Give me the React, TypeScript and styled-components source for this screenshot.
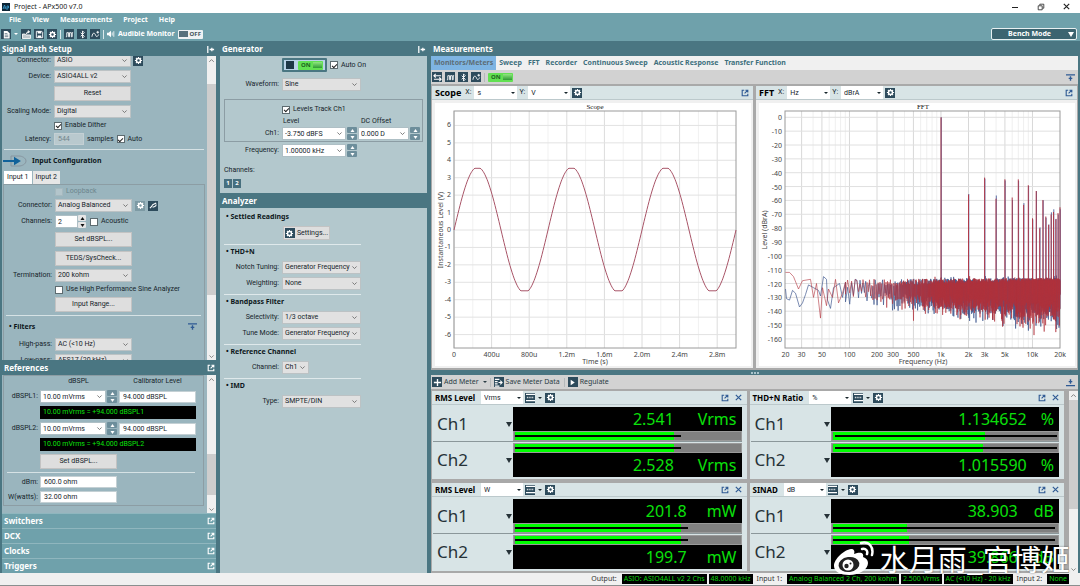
import React from "react";
import styled, { createGlobalStyle } from "styled-components";

const ui = `Roboto, "Liberation Sans", sans-serif`;
const head = `"Noto Sans", "Open Sans", sans-serif`;
const teal = "#4a7682";
const tealLight = "#6fa1ab";
const navy = "#2d4b5c";
const link = "#2f5a94";

const Global = createGlobalStyle`
  *, *::before, *::after { box-sizing: border-box; }
  body { margin: 0; background: ${teal}; color: #16242a; font: 7px/9px ${ui}; }
  button, input, select { font: inherit; color: inherit; margin: 0; padding: 0; border-radius: 0; }
  h1, h2, h3, p { margin: 0; font: inherit; }
`;

/* ---------- window chrome ---------- */
const Shell = styled.div`
  display: flex;
  flex-direction: column;
  height: 100vh;
  overflow: hidden;
`;
const TitleBar = styled.header`
  display: flex;
  align-items: center;
  gap: 4px;
  flex: none;
  height: 13px;
  padding: 0 9px 0 2px;
  background: #fff;
  color: #222;
  font: 7px/13px ${head};
`;
const WindowButtons = styled.div`
  display: flex;
  gap: 17px;
  margin-left: auto;
`;
const PlainButton = styled.button`
  display: flex;
  align-items: center;
  justify-content: center;
  flex: none;
  border: 0;
  background: none;
`;
const MenuBar = styled.nav`
  display: flex;
  align-items: center;
  gap: 11px;
  flex: none;
  height: 14px;
  padding: 0 9px;
  background: ${tealLight};
`;
const MenuItem = styled.button`
  border: 0;
  background: none;
  color: #fff;
  font: bold 7px/14px ${head};
`;
const MainTools = styled.div`
  display: flex;
  align-items: center;
  gap: 3px;
  flex: none;
  height: 14px;
  padding: 0 3px 0 1px;
  background: ${tealLight};
  color: #fff;
`;
const Divider = styled.i<{ $dark?: boolean }>`
  flex: none;
  width: 1px;
  height: 9px;
  background: ${(p) => (p.$dark ? "#b4b9bb" : "#dce9ec")};
`;
const ToolLabel = styled.span`
  font: bold 7px/14px ${head};
`;
const Caret = styled.i<{ $big?: boolean }>`
  flex: none;
  width: 0;
  height: 0;
  border: ${(p) => (p.$big ? 3 : 2)}px solid transparent;
  border-top: ${(p) => (p.$big ? 5 : 2)}px solid currentColor;
  border-bottom: 0;
`;
const BenchMode = styled.button`
  display: flex;
  align-items: center;
  justify-content: flex-end;
  gap: 17px;
  width: 86px;
  height: 12px;
  margin-left: auto;
  padding: 0 2px;
  border: 1px solid #e8f0f1;
  border-radius: 2px;
  background: #3c6470;
  color: #fff;
  font: bold 7px/10px ${head};
`;

/* ---------- columns ---------- */
const Main = styled.main`
  display: flex;
  flex: 1;
  min-height: 0;
  gap: 4px;
  padding: 0 2px;
  background: ${teal};
`;
const Column = styled.section<{ $width?: number }>`
  display: flex;
  flex-direction: column;
  min-width: 0;
  flex: ${(p) => (p.$width ? `0 0 ${p.$width}px` : "1")};
`;
const PanelHead = styled.div<{ $closed?: boolean; $inset?: number }>`
  display: flex;
  align-items: center;
  justify-content: space-between;
  flex: none;
  height: 15px;
  padding: 0 1px 0 ${(p) => p.$inset ?? 2}px;
  background: ${(p) => (p.$closed ? tealLight : teal)};
  border-top: 1px solid ${(p) => (p.$closed ? "#8fb6be" : teal)};
  color: #fff;
`;
const PanelTitle = styled.h2`
  font: bold 8px/14px ${head};
`;
const Viewport = styled.div<{ $grow?: boolean }>`
  display: flex;
  flex: ${(p) => (p.$grow ? "1 1 0" : "none")};
  min-height: 0;
  overflow: hidden;
  background: #9ab5be;
`;
const Scrolled = styled.div<{ $up?: number }>`
  flex: 1;
  min-width: 0;
  margin-top: -${(p) => p.$up ?? 0}px;
`;
const Track = styled.div`
  display: flex;
  flex-direction: column;
  align-items: center;
  flex: none;
  width: 9px;
  background: #f0f0f0;
  color: #777;
`;
const Thumb = styled.i<{ $before: number; $size: number }>`
  width: 100%;
  margin-top: ${(p) => p.$before}px;
  height: ${(p) => p.$size}px;
  background: #cdcdcd;
`;
const TrackEnd = styled.span`
  display: flex;
  margin-top: auto;
`;
const Rule = styled.hr<{ $top?: number; $bottom?: number; $right?: number }>`
  height: 1px;
  border: 0;
  margin: ${(p) => p.$top ?? 3}px ${(p) => p.$right ?? 3}px ${(p) => p.$bottom ?? 3}px 2px;
  background: #d6e2e5;
`;

/* ---------- form parts ---------- */
const Row = styled.div<{ $label: number; $h?: number; $mb?: number }>`
  display: grid;
  grid-template-columns: ${(p) => p.$label}px 1fr;
  column-gap: 3px;
  align-items: center;
  height: ${(p) => p.$h ?? 13}px;
  margin-bottom: ${(p) => p.$mb ?? 3}px;
`;
const Label = styled.label`
  text-align: right;
  white-space: nowrap;
`;
const Cells = styled.div<{ $gap?: number; $h?: number }>`
  display: flex;
  align-items: center;
  gap: ${(p) => p.$gap ?? 3}px;
  height: ${(p) => (p.$h ? `${p.$h}px` : "100%")};
`;
const Box = styled.span<{ $w: number; $white?: boolean }>`
  position: relative;
  display: flex;
  flex: none;
  width: ${(p) => p.$w}px;
  height: 13px;
  border: 1px solid ${(p) => (p.$white ? "#aebfc5" : "#bcc2c4")};
  background: ${(p) => (p.$white ? "#fff" : "#e1e1e1")};
  & > select,
  & > input {
    appearance: none;
    width: 100%;
    min-width: 0;
    height: 11px;
    border: 0;
    padding: 0 2px;
    background: none;
    outline: 0;
  }
  & > svg {
    position: absolute;
    right: 2px;
    top: 2px;
    color: #666;
    pointer-events: none;
  }
`;
const TextBox = styled.input<{ $w: number }>`
  width: ${(p) => p.$w}px;
  height: 12px;
  border: 1px solid #c4d0d4;
  padding: 0 3px;
  background: #fff;
  &:disabled {
    background: #b9c9ce;
    color: #71858c;
  }
`;
const PushButton = styled.button<{ $w: number }>`
  display: flex;
  align-items: center;
  justify-content: center;
  gap: 2px;
  width: ${(p) => p.$w}px;
  height: 100%;
  border: 1px solid #c3c3c3;
  background: #dedede;
`;
const CheckLabel = styled.label<{ $dim?: boolean }>`
  display: flex;
  align-items: center;
  gap: 3px;
  white-space: nowrap;
  color: ${(p) => (p.$dim ? "#6d858d" : "inherit")};
`;
const CheckBox = styled.input`
  appearance: none;
  display: grid;
  place-items: center;
  flex: none;
  width: 8px;
  height: 8px;
  border: 1px solid #5d6b70;
  background: #fff;
  &:checked::before {
    content: "";
    width: 5px;
    height: 3px;
    border: solid #222;
    border-width: 0 0 1px 1px;
    transform: rotate(-45deg);
  }
  &:disabled {
    border-color: #a6b9bf;
    background: #b3c5cb;
  }
`;
const SpinBox = styled.span`
  display: flex;
  flex-direction: column;
  flex: none;
  gap: 1px;
  width: 10px;
  height: 13px;
`;
const SpinButton = styled.button<{ $light?: boolean }>`
  display: grid;
  place-items: center;
  flex: 1;
  border: 0;
  border-radius: 1px;
  background: ${(p) => (p.$light ? "#e6e6e6" : "#6d8e9b")};
  color: ${(p) => (p.$light ? "#111" : "#fff")};
`;
const CountBox = styled.span`
  display: flex;
  & > ${SpinBox} {
    width: 8px;
  }
`;
const Tile = styled.button<{ $dim?: boolean }>`
  display: grid;
  place-items: center;
  flex: none;
  width: 10px;
  height: 10px;
  border: 0;
  background: ${(p) => (p.$dim ? "#7d9aa4" : navy)};
  color: #fff;
`;
const Heading = styled.h3`
  font: bold 7px/14px ${head};
  color: #0d171b;
`;

/* ---------- left column ---------- */
const InputHead = styled.div`
  display: flex;
  align-items: center;
  gap: 4px;
  height: 15px;
  padding-left: 1px;
`;
const Tabs = styled.div`
  display: flex;
  gap: 1px;
  margin: 3px 0 0 2px;
`;
const InputTab = styled.button<{ $active?: boolean }>`
  height: 13px;
  padding: 0 3px;
  border: 0;
  background: ${(p) => (p.$active ? "#fff" : "#e6e6e6")};
`;
const GroupBox = styled.div<{ $pad?: string; $margin?: string }>`
  border: 1px solid #8c9da4;
  padding: ${(p) => p.$pad ?? "2px 0 0"};
  margin: ${(p) => p.$margin ?? "0"};
`;
const FilterHead = styled.div`
  display: flex;
  align-items: center;
  justify-content: space-between;
  height: 15px;
  margin: 3px 7px 4px 5px;
  color: ${link};
`;
const RefGrid = styled.div`
  display: grid;
  grid-template-columns: 33px 77px 77px;
  column-gap: 2px;
  row-gap: 3px;
  align-items: center;
  & > label {
    text-align: right;
    white-space: nowrap;
  }
`;
const Centered = styled.span`
  text-align: center;
  line-height: 11px;
`;
const Readout = styled.output`
  grid-column: 2 / 4;
  height: 13px;
  padding-left: 3px;
  background: #000;
  color: #0be00b;
  line-height: 13px;
`;

/* ---------- generator and analyzer ---------- */
const Panel = styled.div<{ $grow?: boolean }>`
  flex: ${(p) => (p.$grow ? "1" : "none")};
  padding: 2px 4px;
  background: #b3c8cd;
`;
const LevelHeads = styled.div`
  display: grid;
  grid-template-columns: 78px 1fr;
  padding-left: 1px;
  white-space: nowrap;
`;
const OutputSwitch = styled.button`
  display: flex;
  align-items: center;
  gap: 4px;
  width: 45px;
  height: 14px;
  border: 2px solid ${teal};
  border-radius: 1px;
  padding: 0 2px;
  background: #b9d3e8;
`;
const StopMark = styled.i`
  width: 8px;
  height: 8px;
  background: #1e3848;
`;
const OnPill = styled.span`
  display: flex;
  align-items: center;
  justify-content: space-between;
  width: 25px;
  height: 9px;
  padding: 0 1px 0 3px;
  border-radius: 1px;
  background: #62e052;
  color: #1b6420;
  font: bold 6px/9px ${head};
`;
const PillKnob = styled.i<{ $off?: boolean }>`
  width: 9px;
  height: 6px;
  background: ${(p) => (p.$off ? "#56717c" : "linear-gradient(#8fe87f, #2f9a35)")};
`;
const OffPill = styled.button`
  display: flex;
  align-items: center;
  gap: 2px;
  width: 25px;
  height: 9px;
  border: 0;
  border-radius: 1px;
  padding: 0 1px;
  background: #eef2f3;
  color: #44545b;
  font: bold 6px/9px ${head};
`;
const ChannelButton = styled.button`
  width: 8px;
  height: 9px;
  border: 0;
  background: #476f7e;
  color: #fff;
  font: bold 6px/9px ${head};
`;
const Section = styled.section`
  padding: 0 0 1px;
  & + & {
    border-top: 1px solid #dfe9eb;
  }
  & > h3 {
    padding-left: 2px;
    margin-bottom: 2px;
  }
`;
const SectionWidth = styled.div`
  width: 137px;
`;

/* ---------- measurements ---------- */
const MeasureTabs = styled.div`
  display: flex;
  flex: none;
  height: 14px;
  background: #f0f0f0;
`;
const MeasureTab = styled.button<{ $active?: boolean }>`
  border: 0;
  padding: 0 3px;
  background: ${(p) => (p.$active ? "#7eb4e2" : "none")};
  color: ${(p) => (p.$active ? "#5d6d75" : "#3d6f7d")};
  font: bold 7px/14px ${head};
`;
const Tools = styled.div`
  display: flex;
  align-items: center;
  gap: 3px;
  flex: none;
  height: 14px;
  padding: 0 3px 0 1px;
  background: #d2d2d2;
  color: #2b3c44;
  & > :last-child {
    margin-left: auto;
    color: ${link};
  }
`;
const ToolButton = styled.button`
  display: flex;
  align-items: center;
  gap: 2px;
  margin-right: 1px;
  border: 0;
  background: none;
  font: 7px/14px ${head};
`;
const Graphs = styled.div`
  display: grid;
  grid-template-columns: 1fr 1fr;
  gap: 3px;
  flex: none;
  padding: 2px 1px;
  background: #a9a9a9;
`;
const GraphPanel = styled.article`
  min-width: 0;
  background: #f0f0f0;
`;
const GraphHead = styled.div`
  display: flex;
  align-items: center;
  height: 14px;
  padding: 0 4px 0 3px;
  border-bottom: 1px solid #bcc9cc;
  background: #d8e4e6;
  color: #16242a;
`;
const GraphTitle = styled.h3`
  font: bold 9px/13px ${head};
  margin-right: 4px;
  color: #000;
`;
const AxisPick = styled.label`
  display: flex;
  align-items: center;
  gap: 3px;
  margin-right: 2px;
`;
const UnitBox = styled.span<{ $w: number }>`
  position: relative;
  display: flex;
  align-items: center;
  width: ${(p) => p.$w}px;
  height: 13px;
  background: #fff;
  & > select {
    appearance: none;
    width: 100%;
    height: 13px;
    border: 0;
    padding: 1px 3px 0;
    background: none;
    outline: 0;
  }
  & > i {
    position: absolute;
    right: 2px;
    pointer-events: none;
  }
`;
const HeadEnd = styled.span`
  display: flex;
  align-items: center;
  gap: 5px;
  margin-left: auto;
  color: ${link};
`;
const ChartArea = styled.div`
  padding: 3px 2px 2px 3px;
  & > svg {
    display: block;
    width: 100%;
    height: auto;
    background: #fff;
  }
`;
const Splitter = styled.div`
  display: flex;
  align-items: center;
  justify-content: center;
  gap: 1px;
  flex: none;
  height: 5px;
  background: ${teal};
  & > i {
    width: 2px;
    height: 2px;
    background: #a9c3cb;
  }
`;
const MeterArea = styled.div`
  display: flex;
  flex: 1;
  min-height: 0;
  overflow: hidden;
  border-top: 2px solid #a9a9a9;
  background: #a9a9a9;
`;
const MeterGrid = styled.div`
  display: grid;
  grid-template-columns: 1fr 1fr;
  align-content: start;
  gap: 4px 3px;
  flex: 1;
  padding: 0 5px 0 1px;
`;
const MeterCard = styled.article`
  min-width: 0;
  padding-bottom: 2px;
  background: #d8e4e6;
`;
const MeterTitle = styled.h3`
  font: bold 8px/13px ${head};
  margin-right: 6px;
  color: #000;
`;
const MeterTools = styled.span`
  display: flex;
  align-items: center;
  gap: 3px;
  margin-left: 2px;
`;
const MeterBody = styled.div`
  padding: 2px 5px 0 1px;
`;
const Channel = styled.div`
  display: grid;
  grid-template-columns: 80px 1fr;
  & + & {
    border-top: 1px solid #8b979a;
    padding-top: 1px;
  }
`;
const ChannelName = styled.div`
  display: flex;
  align-items: center;
  justify-content: space-between;
  padding: 0 1px 0 4px;
  font: 17px/34px ${head};
  color: #263238;
`;
const ChannelData = styled.div<{ $flip?: boolean }>`
  display: flex;
  flex-direction: ${(p) => (p.$flip ? "column-reverse" : "column")};
`;
const Digits = styled.div<{ $gap: number }>`
  display: flex;
  justify-content: flex-end;
  gap: ${(p) => p.$gap}px;
  height: 24px;
  padding-right: 5px;
  background: #000;
  color: #0be00b;
  font: 16px/24px ${head};
`;
const Bar = styled.div`
  display: grid;
  align-items: center;
  height: 10px;
  padding: 0 1px;
  border: 1px solid #9a9a9a;
  background: #808080;
  & > i {
    grid-area: 1 / 1;
  }
`;
const BarFill = styled.i`
  height: 8px;
  background: #00ff00;
`;
const BarRange = styled.i`
  height: 2px;
  background: #000;
`;

const StatusBar = styled.footer`
  display: flex;
  align-items: center;
  justify-content: flex-end;
  gap: 2px;
  flex: none;
  height: 13px;
  padding-right: 11px;
  border-bottom: 1px solid #8a8f8f;
  background: #f0f0f0;
  color: #333;
  font: 7px/10px ${head};
`;
const StatusLabel = styled.span`
  margin: 0 3px 0 2px;
`;
const Chip = styled.output`
  padding: 0 2px;
  background: #000;
  color: #0bd00b;
`;
const Watermark = styled.div`
  position: absolute;
  right: 10px;
  bottom: 8px;
  display: flex;
  align-items: center;
  gap: 6px;
  color: #fff;
  font: 29px/40px "Noto Sans CJK SC", sans-serif;
  text-shadow: 0 0 2px rgba(0, 0, 0, 0.5);
  pointer-events: none;
`;

/* ---------- icons ---------- */
type IconName =
  | "gear" | "doc" | "open" | "save" | "square" | "bluetooth" | "curve" | "speaker"
  | "swap" | "plus" | "export" | "play" | "popout" | "close" | "collapse" | "expand"
  | "dock" | "mic" | "chevron" | "up" | "down" | "scrollUp" | "min" | "restore" | "meter";

const s = { fill: "none", stroke: "currentColor" } as const;
const glyphs: Record<IconName, React.ReactNode> = {
  gear: (
    <>
      <circle cx="5" cy="5" r="2.2" {...s} strokeWidth="1.6" />
      <path d="M5 1v1.5M5 7.5V9M1 5h1.500M7.500 5H9M2.200 2.200l1 1M6.800 6.800l1 1M7.800 2.200l-1 1M3.200 6.800l-1 1" {...s} strokeWidth="1.3" />
    </>
  ),
  doc: (
    <>
      <path d="M2 1h4l2.500 2.500V9.500H2z" fill="currentColor" />
      <path d="M3 4h3M3 5.700h4M3 7.400h4" fill="none" stroke={navy} strokeWidth=".7" />
    </>
  ),
  open: <path d="M.5 4.500h3l1 1h5v4h-9zM5 4.500C5 2.500 6 2 7.500 2M6.500 .5l2 1.500-2 1.500" fill="currentColor" fillOpacity=".7" stroke="currentColor" />,
  save: (
    <>
      <path d="M1.500 1.500h6l1 1v6h-7z" {...s} />
      <path d="M3 1.500h4v2.500H3zM3 6h4v2.500H3z" fill="currentColor" />
    </>
  ),
  square: <path d="M1 7.500h1V3h2v4.500h1V3h2v4.500h1V3h1" {...s} />,
  bluetooth: <path d="M3 3l4 4-2 2V1l2 2-4 4" {...s} />,
  curve: <path d="M1 7.500C2 2 4 3 5 5.500S7 8 8.500 5M6 2.500h3M7.500 1v3" {...s} />,
  speaker: (
    <>
      <path d="M0 3.500h2L5 1v8L2 6.500H0z" fill="currentColor" />
      <path d="M6.500 3v4M8.500 1.500v7" {...s} />
    </>
  ),
  swap: <path d="M1 3h8M1 7h8M3 1L1 3l2 2M7 5l2 2-2 2" {...s} strokeWidth="1.200" />,
  plus: <path d="M5 1v8M1 5h8" {...s} strokeWidth="1.500" />,
  export: <path d="M1 1.500h5M1 4h3M1 6.500h3M1 9h5M5 5h4M7 3l2 2-2 2" {...s} strokeWidth="1.200" />,
  play: <path d="M3 2l4.500 3L3 8z" fill="currentColor" />,
  popout: <path d="M4 1.500H1.500v7h7V6M5.500 1.500h3v3M8.500 1.500L4.500 5.500" {...s} strokeWidth="1.400" />,
  close: <path d="M2 2l6 6M8 2L2 8" {...s} strokeWidth="1.300" />,
  collapse: <path d="M0 2h10M5 3.500v5M3 6h4" {...s} strokeWidth="1.500" />,
  expand: <path d="M0 8.500h10M5 1.500v5M3 4h4" {...s} strokeWidth="1.500" />,
  dock: <path d="M2 1v8M4 5h5M6.500 3v4" {...s} strokeWidth="1.400" />,
  mic: <path d="M1 8l2-2M3 6c1-3 3-2 5-4M4 7c2-1 4 0 4-3" {...s} strokeWidth="1.200" />,
  chevron: <path d="M2 3.500L5 6.500 8 3.500" {...s} strokeWidth="1.200" />,
  up: <path d="M1 8l4-6 4 6z" fill="currentColor" />,
  down: <path d="M1 2l4 6 4-6z" fill="currentColor" />,
  scrollUp: <path d="M2.500 6.500L5 4l2.500 2.500" {...s} />,
  min: <path d="M2 5.500h6" {...s} />,
  restore: <path d="M1.500 3.500h5v5h-5zM3.500 3V1.500h5v5H7" {...s} />,
  meter: <path d="M0 1.500h10M0 8.500h10M1 5h1M3 5h1M5 5h1M7 5h1" {...s} strokeWidth="1.500" />,
};
const Icon = ({ name, size = 10 }: { name: IconName; size?: number }) => (
  <svg viewBox="0 0 10 10" width={size} height={size} aria-hidden="true">
    {glyphs[name]}
  </svg>
);
const IconTile = ({ name, label, dim }: { name: IconName; label: string; dim?: boolean }) => (
  <Tile aria-label={label} $dim={dim}>
    <Icon name={name} size={9} />
  </Tile>
);

/* ---------- small composites ---------- */
const Select = ({ id, value, w, white, label }: { id?: string; value: string; w: number; white?: boolean; label?: string }) => (
  <Box $w={w} $white={white}>
    <select id={id} aria-label={label} defaultValue={value}>
      <option>{value}</option>
    </select>
    <Icon name="chevron" size={7} />
  </Box>
);
const Combo = ({ id, value, w, label }: { id?: string; value: string; w: number; label?: string }) => (
  <Box $w={w} $white>
    <input id={id} aria-label={label} defaultValue={value} />
    <Icon name="chevron" size={7} />
  </Box>
);
const Spinner = ({ label, light }: { label: string; light?: boolean }) => (
  <SpinBox>
    <SpinButton $light={light} aria-label={`${label} up`}><Icon name="up" size={5} /></SpinButton>
    <SpinButton $light={light} aria-label={`${label} down`}><Icon name="down" size={5} /></SpinButton>
  </SpinBox>
);
const Check = ({ text, on, disabled }: { text: string; on?: boolean; disabled?: boolean }) => (
  <CheckLabel $dim={disabled}>
    <CheckBox type="checkbox" defaultChecked={on} disabled={disabled} />
    {text}
  </CheckLabel>
);
const SelectRow = ({ id, text, value, label, w = 77, mb }: { id: string; text: string; value: string; label: number; w?: number; mb?: number }) => (
  <Row $label={label} $mb={mb}>
    <Label htmlFor={id}>{text}</Label>
    <Select id={id} value={value} w={w} />
  </Row>
);
const ButtonRow = ({ label, text, mb = 4 }: { label: number; text: string; mb?: number }) => (
  <Row $label={label} $h={15} $mb={mb}>
    <span />
    <PushButton $w={77}>{text}</PushButton>
  </Row>
);
const UnitSelect = ({ value, w, label }: { value: string; w: number; label: string }) => (
  <UnitBox $w={w}>
    <select aria-label={label} defaultValue={value}>
      <option>{value}</option>
    </select>
    <Caret />
  </UnitBox>
);
const ScrollBar = ({ before, size }: { before: number; size: number }) => (
  <Track>
    <Icon name="scrollUp" size={9} />
    <Thumb $before={before} $size={size} />
    <TrackEnd><Icon name="chevron" size={7} /></TrackEnd>
  </Track>
);

/* ---------- charts ---------- */
const axisText = { fontFamily: "Noto Sans, sans-serif", fontSize: 7, fill: "#444" };

const ScopeChart = () => {
  const left = 19, right = 301, top = 8, bottom = 245;
  const x = (ms: number) => left + ms * 94;
  const y = (v: number) => 127 - v * 17.43;
  const wave: string[] = [];
  for (let px = 0; px <= 282; px += 1) {
    const v = 3.61 * Math.sin((px / 94) * Math.PI * 2);
    wave.push(`${left + px},${y(Math.max(-3.49, Math.min(3.54, v))).toFixed(1)}`);
  }
  return (
    <svg viewBox="0 0 316 263" role="img" aria-label="Scope graph">
      {Array.from({ length: 15 }, (_, i) => (
        <line key={i} x1={x(i * 0.2)} x2={x(i * 0.2)} y1={top} y2={bottom} stroke={i % 2 ? "#f1f1f1" : "#dcdcdc"} />
      ))}
      {Array.from({ length: 13 }, (_, i) => (
        <g key={i}>
          <line x1={left} x2={right} y1={y(i - 6)} y2={y(i - 6)} stroke="#e2e2e2" />
          <text x={left - 3} y={y(i - 6) + 2} textAnchor="end" {...axisText}>{i - 6}</text>
        </g>
      ))}
      <rect x={left} y={top} width={right - left} height={bottom - top} fill="none" stroke="#9a9a9a" />
      <polyline points={wave.join(" ")} fill="none" stroke="#a95568" strokeWidth="1" />
      {["0", "400u", "800u", "1.2m", "1.6m", "2.0m", "2.4m", "2.8m"].map((t, i) => (
        <text key={t} x={x(i * 0.4)} y={254} textAnchor="middle" {...axisText}>{t}</text>
      ))}
      <text x={160} y={261} textAnchor="middle" {...axisText}>Time (s)</text>
      <text x={160} y={6} textAnchor="middle" fontFamily="Liberation Serif, serif" fontSize="7" fill="#111">Scope</text>
      <text transform="rotate(-90 8 127)" x={8} y={127} textAnchor="middle" {...axisText}>Instantaneous Level (V)</text>
    </svg>
  );
};

const harmonics = [0, -55, -43, -57, -44, -59, -46, -63, -49, -72, -53, -80, -60, -71, -78, -69, -67, -74, -69, -65];

const redStart = [[0, -112], [4, -112], [8, -115], [13, -124], [17, -118], [25, -117], [28, -130], [31, -120], [35, -145], [37, -123], [41, -136], [43, -124], [47, -130], [50, -117], [53, -134], [57, -127], [60, -119]];
const blueStart = [[0, -124], [1, -131], [4, -132], [7, -125], [10, -127], [14, -137], [17, -134], [20, -128], [23, -121], [28, -123], [33, -125], [35, -129], [38, -115], [41, -117], [42, -132], [45, -138], [48, -123], [54, -120], [57, -130], [60, -119]];

const plotX = (f: number) => 26.5 + 91.5 * Math.log10(f / 20);
const plotY = (db: number) => 14.3 - db * 1.385;

const spectrum = (seed: number, start: number[][], shift: number) => {
  let state = seed;
  const rnd = () => ((state = (state * 16807) % 2147483647) / 2147483647);
  const pts = start.map(([px, db]) => [px, db]);
  let f = 20 * Math.pow(10, 60 / 91.5);
  let low = true;
  while (f < 20000) {
    const px = 91.5 * Math.log10(f / 20);
    const t = Math.min(1, Math.max(0, (px - 60) / 200));
    const depth = 10 + 14 * t;
    const spike = rnd() > 0.96 ? rnd() * 10 : 0;
    const db = low
      ? -125 - 8 * t - rnd() * depth * (0.4 + rnd() * 0.6) - spike
      : -123 + 5 * t + rnd() * (6 - 4 * t) + (rnd() > 0.97 ? 2 : 0);
    pts.push([px, db]);
    low = rnd() > 0.1 ? !low : low;
    f *= Math.pow(10, Math.max(0.2, 91.5 * Math.log10(1 + 5 / f)) / 91.5);
  }
  const noise = pts.map(([px, db]) => `${(26.5 + px).toFixed(1)},${plotY(db).toFixed(1)}`).join(" ");
  const peaks = harmonics
    .map((db, i) => `M${(plotX((i + 1) * 1000) + shift).toFixed(1)} ${plotY(-128)}V${plotY(db + (i ? (rnd() - 0.6) * 3 : 0)).toFixed(1)}`)
    .join("");
  return { noise, peaks };
};
const blue = spectrum(4211, blueStart, 0.3);
const red = spectrum(977, redStart, 0);

const FftChart = () => {
  const left = 26, right = 301, top = 8, bottom = 245;
  const lines = [1, 2, 3].flatMap((d) => [1, 2, 3, 4, 5, 6, 7, 8, 9].map((m) => m * Math.pow(10, d))).filter((f) => f >= 30);
  const ticks: [number, string][] = [[20, "20"], [30, "30"], [50, "50"], [100, "100"], [200, "200"], [300, "300"], [500, "500"], [1000, "1k"], [2000, "2k"], [3000, "3k"], [5000, "5k"], [10000, "10k"], [20000, "20k"]];
  return (
    <svg viewBox="0 0 316 263" role="img" aria-label="FFT graph">
      {[...lines, 10000].map((f) => (
        <line key={f} x1={plotX(f)} x2={plotX(f)} y1={top} y2={bottom} stroke={/^[1235]/.test(String(f)) ? "#d8d8d8" : "#efefef"} />
      ))}
      {Array.from({ length: 17 }, (_, i) => (
        <g key={i}>
          <line x1={left} x2={right} y1={plotY(-i * 10)} y2={plotY(-i * 10)} stroke="#e0e0e0" />
          <text x={left - 3} y={plotY(-i * 10) + 3} textAnchor="end" {...axisText}>{i ? -i * 10 : 0}</text>
        </g>
      ))}
      <rect x={left} y={top} width={right - left} height={bottom - top} fill="none" stroke="#9a9a9a" />
      <g fill="none">
        <path d={blue.peaks} stroke="#5d6fa5" strokeWidth="1" />
        <polyline points={blue.noise} stroke="#41598f" strokeWidth="0.7" />
        <path d={red.peaks} stroke="#b03a4a" strokeWidth="1" />
        <polyline points={red.noise} stroke="#b0303b" strokeWidth="0.6" />
      </g>
      {ticks.map(([f, t]) => (
        <text key={t} x={plotX(f)} y={254} textAnchor="middle" {...axisText}>{t}</text>
      ))}
      <text x={164} y={261} textAnchor="middle" {...axisText}>Frequency (Hz)</text>
      <text x={164} y={6} textAnchor="middle" fontFamily="Liberation Serif, serif" fontSize="7" fill="#111">FFT</text>
      <text transform="rotate(-90 8 127)" x={8} y={127} textAnchor="middle" {...axisText}>Level (dBrA)</text>
    </svg>
  );
};

const Graph = ({ title, xUnit, yUnit, children }: { title: string; xUnit: string; yUnit: string; children: React.ReactNode }) => (
  <GraphPanel>
    <GraphHead>
      <GraphTitle>{title}</GraphTitle>
      <AxisPick>X: <UnitSelect value={xUnit} w={43} label={`${title} X unit`} /></AxisPick>
      <AxisPick>Y: <UnitSelect value={yUnit} w={42} label={`${title} Y unit`} /></AxisPick>
      <IconTile name="gear" label={`${title} settings`} />
      <HeadEnd><PlainButton aria-label="Pop out"><Icon name="popout" size={8} /></PlainButton></HeadEnd>
    </GraphHead>
    <ChartArea>{children}</ChartArea>
  </GraphPanel>
);

/* ---------- meters ---------- */
type MeterData = {
  title: string; unit: string; suffix: string; gap: number;
  rows: { value: string; fill: number }[]; from: number; to: number;
};
const meters: MeterData[] = [
  { title: "RMS Level", unit: "Vrms", suffix: "Vrms", gap: 24, rows: [{ value: "2.541", fill: 71 }, { value: "2.528", fill: 71 }], from: 0, to: 74 },
  { title: "THD+N Ratio", unit: "%", suffix: "%", gap: 14, rows: [{ value: "1.134652", fill: 68 }, { value: "1.015590", fill: 67 }], from: 1, to: 100 },
  { title: "RMS Level", unit: "W", suffix: "mW", gap: 20, rows: [{ value: "201.8", fill: 74 }, { value: "199.7", fill: 74 }], from: 0, to: 77 },
  { title: "SINAD", unit: "dB", suffix: "dB", gap: 16, rows: [{ value: "38.903", fill: 33 }, { value: "39.866", fill: 34 }], from: 0, to: 99 },
];
const Meter = ({ m }: { m: MeterData }) => (
  <MeterCard>
    <GraphHead>
      <MeterTitle>{m.title}</MeterTitle>
      <UnitSelect value={m.unit} w={42} label={`${m.title} unit`} />
      <MeterTools>
        <IconTile name="meter" label="Meter display" />
        <Caret />
        <IconTile name="gear" label="Meter settings" />
      </MeterTools>
      <HeadEnd>
        <PlainButton aria-label="Pop out"><Icon name="popout" size={8} /></PlainButton>
        <PlainButton aria-label="Close meter"><Icon name="close" size={9} /></PlainButton>
      </HeadEnd>
    </GraphHead>
    <MeterBody>
      {m.rows.map((r, i) => (
        <Channel key={r.value}>
          <ChannelName>Ch{i + 1}<Caret $big /></ChannelName>
          <ChannelData $flip={i === 1}>
            <Digits $gap={m.gap}><span>{r.value}</span><span>{m.suffix}</span></Digits>
            <Bar>
              <BarFill style={{ width: `${r.fill}%` }} />
              <BarRange style={{ marginLeft: `${m.from}%`, width: `${m.to - m.from}%` }} />
            </Bar>
          </ChannelData>
        </Channel>
      ))}
    </MeterBody>
  </MeterCard>
);

const Closed = ({ title }: { title: string }) => (
  <PanelHead $closed>
    <PanelTitle>{title}</PanelTitle>
    <PlainButton aria-label={`Open ${title}`}><Icon name="popout" size={8} /></PlainButton>
  </PanelHead>
);

const SignalPath = () => (
  <Viewport $grow>
    <Scrolled $up={2}>
      <Row $label={49}>
        <Label htmlFor="out-conn">Connector:</Label>
        <Cells $gap={2}><Select id="out-conn" value="ASIO" w={77} /><IconTile name="gear" label="Connector settings" /></Cells>
      </Row>
      <SelectRow id="device" text="Device:" value="ASIO4ALL v2" label={49} />
      <ButtonRow label={49} text="Reset" />
      <SelectRow id="scaling" text="Scaling Mode:" value="Digital" label={49} />
      <Row $label={49} $h={9} $mb={3}><span /><Check text="Enable Dither" on /></Row>
      <Row $label={49} $h={12} $mb={1}>
        <Label htmlFor="latency">Latency:</Label>
        <Cells><TextBox id="latency" $w={30} defaultValue="544" disabled /><span>samples</span><Check text="Auto" on /></Cells>
      </Row>
      <Rule $top={4} $bottom={3} />
      <InputHead>
        <svg width="25" height="12" viewBox="0 0 25 12" aria-hidden="true">
          <path d="M8 1h8c3 0 7 2 7 5s-4 5-7 5H8z" fill="none" stroke="#8796a0" />
          <path d="M0 6h14M12 3.500l4 2.500-4 2.500z" fill="#10629a" stroke="#10629a" strokeWidth="2" />
        </svg>
        <Heading>Input Configuration</Heading>
      </InputHead>
      <Tabs><InputTab $active>Input 1</InputTab><InputTab>Input 2</InputTab></Tabs>
      <GroupBox $margin="0 2px 0 1px">
        <Row $label={48} $h={9}><span /><Check text="Loopback" disabled /></Row>
        <Row $label={48}>
          <Label htmlFor="in-conn">Connector:</Label>
          <Cells $gap={3}><Select id="in-conn" value="Analog Balanced" w={77} /><IconTile name="gear" label="Input settings" dim /><IconTile name="mic" label="Microphone" /></Cells>
        </Row>
        <Row $label={48} $mb={4}>
          <Label htmlFor="channels">Channels:</Label>
          <Cells $gap={4}>
            <CountBox>
              <Box $w={23} $white><input id="channels" defaultValue="2" /></Box>
              <Spinner label="Channels" light />
            </CountBox>
            <Check text="Acoustic" />
          </Cells>
        </Row>
        <ButtonRow label={48} text="Set dBSPL..." />
        <ButtonRow label={48} text="TEDS/SysCheck..." mb={3} />
        <SelectRow id="term" text="Termination:" value="200 kohm" label={48} />
        <Row $label={48} $h={9}><span /><Check text="Use High Performance Sine Analyzer" /></Row>
        <ButtonRow label={48} text="Input Range..." mb={3} />
        <Rule $top={0} $bottom={0} />
        <FilterHead><Heading>• Filters</Heading><PlainButton aria-label="Collapse filters"><Icon name="collapse" size={9} /></PlainButton></FilterHead>
        <SelectRow id="hp" text="High-pass:" value="AC (<10 Hz)" label={48} />
        <SelectRow id="lp" text="Low-pass:" value="AES17 (20 kHz)" label={48} />
      </GroupBox>
    </Scrolled>
    <ScrollBar before={19} size={211} />
  </Viewport>
);

const RefRow = ({ n }: { n: number }) => (
  <>
    <Label htmlFor={`ref${n}`}>dBSPL{n}:</Label>
    <Cells $gap={1}><Combo id={`ref${n}`} value="10.00 mVrms" w={66} /><Spinner label={`dBSPL${n}`} /></Cells>
    <TextBox $w={77} aria-label={`Calibrator level ${n}`} defaultValue="94.000 dBSPL" />
    <Readout>10.00 mVrms = +94.000 dBSPL{n}</Readout>
  </>
);

const References = () => (
  <Viewport>
    <Scrolled>
      <GroupBox $pad="0 0 2px 1px" $margin="0 3px 7px 1px">
        <RefGrid>
          <span /><Centered>dBSPL</Centered><Centered>Calibrator Level</Centered>
          <RefRow n={1} />
          <RefRow n={2} />
          <span /><Cells $h={15}><PushButton $w={77}>Set dBSPL...</PushButton></Cells>
        </RefGrid>
        <Rule $top={3} $bottom={3} $right={8} />
        <RefGrid>
          <Label htmlFor="dbm">dBm:</Label><TextBox id="dbm" $w={77} defaultValue="600.0 ohm" /><span />
          <Label htmlFor="watts">W(watts):</Label><TextBox id="watts" $w={77} defaultValue="32.00 ohm" /><span />
        </RefGrid>
      </GroupBox>
    </Scrolled>
    <ScrollBar before={70} size={41} />
  </Viewport>
);

export default function App() {
  return (
    <>
      <Global />
      <Shell>
        <TitleBar>
          <svg width="8" height="8" viewBox="0 0 8 8" aria-hidden="true">
            <rect width="8" height="8" fill="#0c2536" />
            <path d="M1 6l1.500-4L4 6M1.500 5h2M5 7V3h1.500v2H5" fill="none" stroke="#3fa3d8" strokeWidth=".8" />
          </svg>
          <h1>Project - APx500 v7.0</h1>
          <WindowButtons>
            <PlainButton aria-label="Minimize"><Icon name="min" /></PlainButton>
            <PlainButton aria-label="Restore"><Icon name="restore" size={8} /></PlainButton>
            <PlainButton aria-label="Close"><Icon name="close" size={9} /></PlainButton>
          </WindowButtons>
        </TitleBar>
        <MenuBar>
          {["File", "View", "Measurements", "Project", "Help"].map((t) => <MenuItem key={t}>{t}</MenuItem>)}
        </MenuBar>
        <MainTools>
          <IconTile name="doc" label="New" />
          <Caret />
          <IconTile name="open" label="Open" />
          <IconTile name="save" label="Save" />
          <IconTile name="gear" label="Settings" />
          <Divider />
          <IconTile name="square" label="Digital" />
          <IconTile name="bluetooth" label="Bluetooth" />
          <IconTile name="curve" label="Curve" />
          <Divider />
          <Icon name="speaker" size={8} />
          <ToolLabel>Audible Monitor</ToolLabel>
          <OffPill><PillKnob $off />OFF</OffPill>
          <BenchMode>Bench Mode<Caret $big /></BenchMode>
        </MainTools>
        <Main>
          <Column $width={214}>
            <PanelHead $inset={0}>
              <PanelTitle>Signal Path Setup</PanelTitle>
              <PlainButton aria-label="Dock panel"><Icon name="dock" size={9} /></PlainButton>
            </PanelHead>
            <SignalPath />
            <PanelHead>
              <PanelTitle>References</PanelTitle>
              <PlainButton aria-label="Pop out references"><Icon name="popout" size={8} /></PlainButton>
            </PanelHead>
            <References />
            <Closed title="Switchers" />
            <Closed title="DCX" />
            <Closed title="Clocks" />
            <Closed title="Triggers" />
          </Column>
          <Column $width={207}>
            <PanelHead>
              <PanelTitle>Generator</PanelTitle>
              <PlainButton aria-label="Dock generator"><Icon name="dock" size={9} /></PlainButton>
            </PanelHead>
            <Panel>
              <Row $label={55} $h={14} $mb={6}>
                <span />
                <Cells><OutputSwitch aria-label="Generator output"><StopMark /><OnPill>ON<PillKnob /></OnPill></OutputSwitch><Check text="Auto On" on /></Cells>
              </Row>
              <SelectRow id="waveform" text="Waveform:" value="Sine" label={55} w={79} mb={8} />
              <GroupBox $pad="5px 0 0" $margin="0 0 2px">
                <Row $label={54} $h={9} $mb={3}><span /><Check text="Levels Track Ch1" on /></Row>
                <Row $label={54} $h={9} $mb={1}>
                  <span />
                  <LevelHeads><span>Level</span><span>DC Offset</span></LevelHeads>
                </Row>
                <Row $label={54} $mb={1}>
                  <Label htmlFor="gen-level">Ch1:</Label>
                  <Cells $gap={1}>
                    <Combo id="gen-level" value="-3.750 dBFS" w={64} /><Spinner label="Level" />
                    <Combo value="0.000 D" w={51} label="DC offset" /><Spinner label="DC offset" />
                  </Cells>
                </Row>
              </GroupBox>
              <Row $label={55} $mb={9}>
                <Label htmlFor="freq">Frequency:</Label>
                <Cells $gap={1}><Combo id="freq" value="1.00000 kHz" w={64} /><Spinner label="Frequency" /></Cells>
              </Row>
              <p>Channels:</p>
              <Cells $gap={1} $h={16}><ChannelButton>1</ChannelButton><ChannelButton>2</ChannelButton></Cells>
            </Panel>
            <PanelHead>
              <PanelTitle>Analyzer</PanelTitle>
            </PanelHead>
            <Panel $grow>
              <SectionWidth>
                <Section>
                  <Heading>• Settled Readings</Heading>
                  <Row $label={56} $h={14}><span /><PushButton $w={47}><Tile as="span"><Icon name="gear" size={9} /></Tile>Settings...</PushButton></Row>
                </Section>
                <Section>
                  <Heading>• THD+N</Heading>
                  <SelectRow id="notch" text="Notch Tuning:" value="Generator Frequency" label={55} w={79} />
                  <SelectRow id="weight" text="Weighting:" value="None" label={55} w={79} />
                </Section>
                <Section>
                  <Heading>• Bandpass Filter</Heading>
                  <SelectRow id="select" text="Selectivity:" value="1/3 octave" label={55} w={79} />
                  <SelectRow id="tune" text="Tune Mode:" value="Generator Frequency" label={55} w={79} />
                </Section>
                <Section>
                  <Heading>• Reference Channel</Heading>
                  <SelectRow id="refch" text="Channel:" value="Ch1" label={55} w={27} />
                </Section>
                <Section>
                  <Heading>• IMD</Heading>
                  <SelectRow id="imd" text="Type:" value="SMPTE/DIN" label={55} w={79} />
                </Section>
              </SectionWidth>
            </Panel>
          </Column>
          <Column>
            <PanelHead><PanelTitle>Measurements</PanelTitle></PanelHead>
            <MeasureTabs>
              {["Monitors/Meters", "Sweep", "FFT", "Recorder", "Continuous Sweep", "Acoustic Response", "Transfer Function"].map((t, i) => (
                <MeasureTab key={t} $active={i === 0}>{t}</MeasureTab>
              ))}
            </MeasureTabs>
            <Tools>
              <IconTile name="swap" label="Input output" />
              <IconTile name="square" label="Digital signal" />
              <IconTile name="bluetooth" label="Bluetooth devices" />
              <IconTile name="curve" label="Add graph" />
              <Divider $dark />
              <OnPill>ON<PillKnob /></OnPill>
              <PlainButton aria-label="Collapse graphs"><Icon name="collapse" size={9} /></PlainButton>
            </Tools>
            <Graphs>
              <Graph title="Scope" xUnit="s" yUnit="V"><ScopeChart /></Graph>
              <Graph title="FFT" xUnit="Hz" yUnit="dBrA"><FftChart /></Graph>
            </Graphs>
            <Splitter><i /><i /><i /></Splitter>
            <Tools>
              <ToolButton><Tile as="span"><Icon name="plus" size={9} /></Tile>Add Meter</ToolButton>
              <Caret />
              <Divider $dark />
              <ToolButton><Tile as="span"><Icon name="export" size={9} /></Tile>Save Meter Data</ToolButton>
              <Divider $dark />
              <ToolButton><Tile as="span"><Icon name="play" size={9} /></Tile>Regulate</ToolButton>
              <PlainButton aria-label="Expand meters"><Icon name="expand" size={9} /></PlainButton>
            </Tools>
            <MeterArea>
              <MeterGrid>{meters.map((m, i) => <Meter key={i} m={m} />)}</MeterGrid>
              <ScrollBar before={0} size={109} />
            </MeterArea>
          </Column>
        </Main>
        <StatusBar>
          <StatusLabel>Output:</StatusLabel>
          <Chip>ASIO: ASIO4ALL v2 2 Chs</Chip>
          <Chip>48.0000 kHz</Chip>
          <StatusLabel>Input 1:</StatusLabel>
          <Chip>Analog Balanced 2 Ch, 200 kohm</Chip>
          <Chip>2.500 Vrms</Chip>
          <Chip>AC (&lt;10 Hz) - 20 kHz</Chip>
          <StatusLabel>Input 2:</StatusLabel>
          <Chip>None</Chip>
        </StatusBar>
      </Shell>
      <Watermark>
        <svg width="40" height="34" viewBox="0 0 40 34" aria-hidden="true">
          <path d="M17 8c-7 1-17 10-17 17 0 6 7 9 15 9 11 0 19-6 19-12 0-3-2-5-5-6 1-3-1-6-9-3 1-3 0-5-3-5z" fill="#fff" />
          <ellipse cx="15" cy="23.500" rx="10.500" ry="7.500" fill="#222" transform="rotate(-8 15 23.500)" />
          <circle cx="14" cy="24" r="5.500" fill="#fff" />
          <circle cx="12.500" cy="25" r="2.200" fill="#222" />
          <circle cx="16.500" cy="22.500" r="1" fill="#222" />
          <path d="M27 2c8-2 13 4 11 12M28 8c4-1 6 2 5 5" fill="none" stroke="#fff" strokeWidth="2.500" strokeLinecap="round" />
        </svg>
        水月雨_官博姬
      </Watermark>
    </>
  );
}
